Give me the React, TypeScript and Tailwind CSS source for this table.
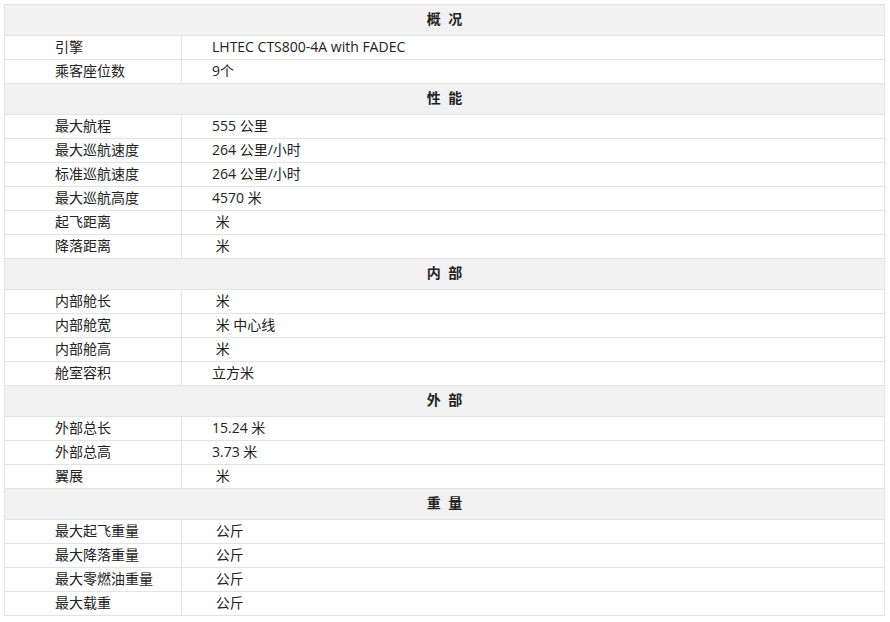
type Row = [string, string];
type Section = { title: string; rows: Row[] };

const sections: Section[] = [
  {
    title: "概 况",
    rows: [
      ["引擎", "LHTEC CTS800-4A with FADEC"],
      ["乘客座位数", "9个"],
    ],
  },
  {
    title: "性 能",
    rows: [
      ["最大航程", "555 公里"],
      ["最大巡航速度", "264 公里/小时"],
      ["标准巡航速度", "264 公里/小时"],
      ["最大巡航高度", "4570 米"],
      ["起飞距离", "\u00a0米"],
      ["降落距离", "\u00a0米"],
    ],
  },
  {
    title: "内 部",
    rows: [
      ["内部舱长", "\u00a0米"],
      ["内部舱宽", "\u00a0米 中心线"],
      ["内部舱高", "\u00a0米"],
      ["舱室容积", "立方米"],
    ],
  },
  {
    title: "外 部",
    rows: [
      ["外部总长", "15.24 米"],
      ["外部总高", "3.73 米"],
      ["翼展", "\u00a0米"],
    ],
  },
  {
    title: "重 量",
    rows: [
      ["最大起飞重量", "\u00a0公斤"],
      ["最大降落重量", "\u00a0公斤"],
      ["最大零燃油重量", "\u00a0公斤"],
      ["最大载重", "\u00a0公斤"],
    ],
  },
];

export default function App() {
  return (
    <div
      className="w-[890px] h-[622px] bg-white pt-[4px] pl-[4px] text-[14px] text-[#222]"
      style={{ fontFamily: '"Open Sans", "Noto Sans CJK SC", sans-serif' }}
    >
      <table className="w-[881px] border-collapse border border-[#e3e3e3]">
        <tbody>
          {sections.map((s) => (
            <>
              <tr key={s.title} className="h-[31px] bg-[#f2f2f2]">
                <td
                  colSpan={2}
                  className="border border-[#e3e3e3] text-center font-bold pb-[2px] pl-[2px] tracking-[2px] leading-[20px]"
                >
                  {s.title}
                </td>
              </tr>
              {s.rows.map(([k, v]) => (
                <tr key={s.title + k} className="h-[24px]">
                  <td className="w-[177px] border border-[#e3e3e3] pl-[50px] pb-[2px] leading-[20px]">
                    {k}
                  </td>
                  <td className="border border-[#e3e3e3] pl-[30px] pb-[2px] leading-[20px]">
                    {v}
                  </td>
                </tr>
              ))}
            </>
          ))}
        </tbody>
      </table>
    </div>
  );
}
